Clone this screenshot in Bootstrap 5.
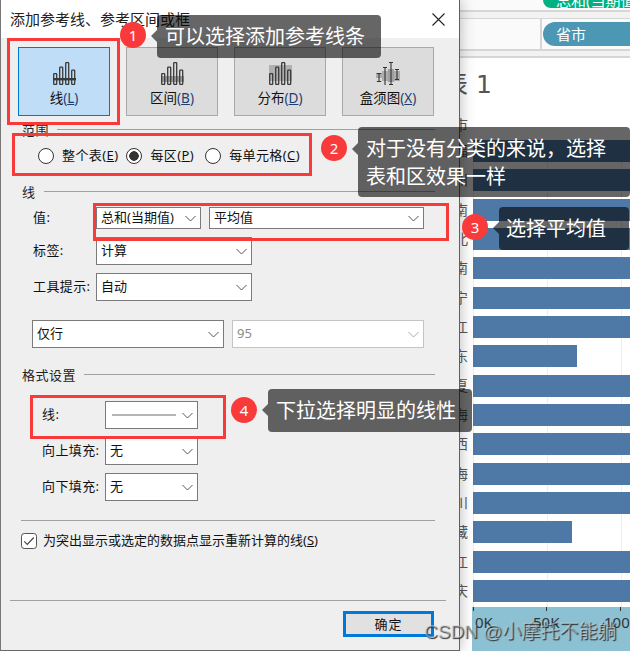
<!DOCTYPE html>
<html lang="zh-CN">
<head>
<meta charset="utf-8">
<title>添加参考线</title>
<link href="https://cdn.jsdelivr.net/npm/bootstrap@5.3.0/dist/css/bootstrap.min.css" rel="stylesheet">
<style>
html,body{height:651px;overflow:hidden}
body{position:relative;width:630px;background:#fff;font-family:"Noto Sans","Noto Sans CJK SC",sans-serif;font-size:13px;line-height:1.2;color:#111}
/* dialog */
.dlg{position:relative;z-index:2;flex:0 0 460px;height:651px;background:#efefef;border-left:1px solid #777;border-right:1px solid #5f5f5f;border-bottom:1px solid #666;box-shadow:0 0 14px rgba(0,0,0,.28)}
.dlg-title{height:38px;background:#fff;padding:0 14px 0 9px;font-size:15px;color:#222}
.tool-row{margin:9px 0 0 17px;gap:16px}
.tool-btn{width:92px;height:69px;border-radius:0;background:#dcdcdc;border:1px solid #a9a9a9;padding:14px 0 8px;font-size:13.5px;color:#111;line-height:1.2}
.tool-btn.on{background:#bfddf6;border-color:#0078d7}
.tool-btn svg{display:block;margin:0 auto 5px}
.mn{color:#1c3f73}
.grp{margin:0 24px 0 21px;height:16px;gap:8px;font-size:13px;letter-spacing:.5px;color:#222}
.grp span{padding-top:4px}
.grp i{flex:1;height:1px;background:#a0a0a0}
.grp.g-range{margin-top:5px}
.radios{margin:9px 0 0 37px;height:20px}
.radios .form-check{margin:0;padding:0;min-height:0;display:flex;align-items:center;gap:8px}
.radios .gp1{margin-right:8px}
.radios .gp2{margin-right:11px}
.radios label{letter-spacing:.4px}
.rad{width:16px!important;height:16px;margin:0!important;float:none!important;border:1px solid #333;background-color:#fff;flex:none}
.rad:checked{background-color:#fff;border-color:#333;background-image:radial-gradient(circle,#333 0 4.5px,transparent 5px)}
.frow{display:flex;align-items:center}
.lbl{width:63px;flex:none;font-size:13px;letter-spacing:.4px;color:#111;white-space:nowrap}
.sel{border-radius:0;border:1px solid #7a7a7a;background-color:#fff;padding:0 20px 0 4px;font-size:13px;line-height:1.2;color:#111;background-image:url("data:image/svg+xml,%3csvg xmlns='http://www.w3.org/2000/svg' viewBox='0 0 11 7'%3e%3cpath fill='none' stroke='%23555' stroke-width='1' d='M.5 1l5 5 5-5'/%3e%3c/svg%3e");background-size:11px 7px;background-position:right 4px center;box-shadow:none}
.sel:disabled{background-color:#fff;border-color:#c4c4c4;color:#8a8a8a;background-image:url("data:image/svg+xml,%3csvg xmlns='http://www.w3.org/2000/svg' viewBox='0 0 11 7'%3e%3cpath fill='none' stroke='%23aaa' stroke-width='1' d='M.5 1l5 5 5-5'/%3e%3c/svg%3e")}
.h21{height:22px}.h28{height:28px}
.w105{width:105px}.w215{width:215px}.w157{width:156px}.w192{width:192px}.w93{width:93px}
.line-sel{display:flex;align-items:center;padding-left:6px}
.line-sel i{display:block;width:64px;height:2px;background:#b5b5b5}
.m-val{margin:8px 0 0 32px}.m-8{margin:8px 0 0 32px}.m-opt{margin:19px 0 0 31px;gap:8px}
.grp.g-line{margin-top:17px}.grp.g-fmt{margin-top:18px}
.m-l1{margin:19px 0 0 41px}.m-l2{margin:8px 0 0 41px}
.rule1{height:1px;background:#a0a0a0;margin:19px 24px 0 20px}
.chk-row{margin:12px 0 0 20px;height:16px;gap:6px;letter-spacing:0}
.chk{width:16px!important;height:16px;margin:0!important;float:none!important;border-radius:0;border:1px solid #555;background-color:#fff;flex:none}
.chk:checked{background-color:#fff;border-color:#555;background-image:url("data:image/svg+xml,%3csvg xmlns='http://www.w3.org/2000/svg' viewBox='0 0 16 16'%3e%3cpath fill='none' stroke='%23444' stroke-width='1.3' d='M2.5 8.5l3.5 3.5 7.5-8'/%3e%3c/svg%3e")}
.rule2{height:1px;background:#a0a0a0;margin:51px 13px 0 9px}
.ok-btn{width:91px;height:26px;margin:10px 25px 0 auto;display:block;padding:0;border-radius:0;background:#e1e1e1;border:3px solid #0078d7;font-size:13px;letter-spacing:1px;color:#111;line-height:1}
/* report behind */
.rpt{flex:1;min-width:0;height:651px;position:relative;overflow:hidden}
.hd1{background:#fafafa;border-bottom:2px solid #d6d6d6;padding-left:83px;box-sizing:content-box;height:10px}
.hd-gap{height:6px;background:#f2f2f2}
.hd2{background:#fafafa;border-top:1px solid #d6d6d6;border-bottom:2px solid #d6d6d6;box-sizing:content-box;height:30px}
.hd2 .cell{margin-left:80px;height:30px;border-left:2px solid #d6d6d6;padding:3px 0 0 1px}
.hd-gap2{background:#f2f2f2;border-bottom:2px solid #d6d6d6;box-sizing:content-box;height:5px}
.pill-g{height:8px;background:#00b181;border-radius:0 0 0 12px;color:#fff;font-size:15px;line-height:0;padding-left:13px;overflow:hidden;white-space:nowrap}
.pill-t{height:24px;background:#4c97b4;border-radius:12px 0 0 12px;color:#fff;font-size:15px;line-height:24px;padding-left:13px;letter-spacing:0}
.rpt-title{margin:10px 0 0 -17px;font-family:"DejaVu Sans","Noto Sans CJK SC",sans-serif;font-size:25px;line-height:34px;color:#555;white-space:nowrap}
.head-cat{height:22px;margin-top:12px;width:13px;overflow:hidden;position:relative;font-size:14px;line-height:22px;color:#5a5a5a}
.head-cat span{position:absolute;right:5px;top:0}
.plot{margin-top:4px;height:467px;background-image:linear-gradient(90deg,#eee 0 1px,transparent 1px);background-size:74px 100%;background-position:87px 0;background-repeat:repeat-x}
.brow{height:22px;margin-bottom:7.33px}
.cat{width:13px;flex:none;overflow:hidden;position:relative;font-size:14px;line-height:22px;color:#5a5a5a}
.cat span{position:absolute;right:5px;top:0}
.bar{height:22px;background:#4e79a7}
.axis{margin-left:12px;height:44px;background:#8cc1d3;position:relative;color:#333;font-size:15px;background-image:linear-gradient(#333 0 4px,transparent 4px),linear-gradient(#333 0 4px,transparent 4px),linear-gradient(#333 0 4px,transparent 4px);background-size:1px 100%;background-repeat:no-repeat;background-position:1px 0,74px 0,148px 0;padding-top:6px;white-space:nowrap}
.axis-in b{font-weight:400;display:block}
.t0{margin-left:3px;width:58px}.t1{width:71px}
/* annotations over the picture */
.frame{position:absolute;z-index:5;border:3px solid #f93a3a}
.dot{position:absolute;z-index:6;width:26px;height:26px;border-radius:50%;background:#f93a3a;color:#fff;font-size:15px;line-height:26px;text-align:center}
.tip{position:absolute;z-index:4;background:rgba(0,0,0,.6);color:#fff;border-radius:4px;font-size:20px;padding:0 0 0 8px;white-space:nowrap;line-height:43px}
.tip::before{content:"";position:absolute;left:-6px;top:15px;border-style:solid;border-width:6px 6px 6px 0;border-color:transparent rgba(0,0,0,.6) transparent transparent}
.tip.two{line-height:28px;padding-top:8px}
.tip.two::before{top:16px}
.f1{left:7px;top:38px;width:113px;height:87px}
.f2{left:12px;top:133px;width:300px;height:43px}
.f3{left:93px;top:203px;width:356px;height:38px}
.f4{left:30px;top:395px;width:196px;height:44px}
.d1{left:120px;top:22px}.d2{left:321px;top:135px}.d3{left:462px;top:214px}.d4{left:231px;top:397px}
.t-1{left:157px;top:15px;width:224px;height:43px}
.t-2{left:358px;top:127px;width:272px;height:70px}
.t-3{left:499px;top:207px;width:130px;height:43px;padding-left:7px}
.t-4{left:268px;top:389px;width:204px;height:43px}
.wm{position:absolute;z-index:7;left:424px;top:619px;font-size:19px;line-height:26px;color:rgba(225,225,225,.5);text-shadow:1px 1px 1px rgba(30,30,30,.9);white-space:nowrap;font-family:"Liberation Sans","Noto Sans CJK SC",sans-serif}
</style>
</head>
<body>
<svg width="0" height="0" class="position-absolute">
  <defs>
    <g id="barsx" fill="none" stroke="#3a3a3a" stroke-width="1.3">
      <rect x=".7" y="11.7" width="3" height="10.6" rx=".6"/>
      <rect x="6.7" y="5.2" width="3" height="17.1" rx=".6"/>
      <rect x="12.7" y=".7" width="3" height="21.6" rx=".6"/>
      <rect x="18.7" y="8.2" width="3" height="14.1" rx=".6"/>
    </g>
  </defs>
</svg>
<div class="d-flex">
  <div class="dlg">
    <div class="dlg-title d-flex align-items-center justify-content-between">
      <span>添加参考线、参考区间或框</span>
      <svg width="13" height="13" viewBox="0 0 13 13"><path d="M.5.5l12 12M12.5.5l-12 12" stroke="#222" stroke-width="1.1" fill="none"/></svg>
    </div>
    <div class="d-flex tool-row">
      <button type="button" class="btn tool-btn on">
        <svg width="23" height="23" viewBox="0 0 23 23"><use href="#barsx"/><rect x="0" y="16" width="23" height="2.4" fill="#3a3a3a"/></svg>
        线<span class="mn">(<u>L</u>)</span>
      </button>
      <button type="button" class="btn tool-btn">
        <svg width="23" height="23" viewBox="0 0 23 23"><rect x="0" y="14" width="23" height="6" fill="#9a9a9a"/><use href="#barsx"/></svg>
        区间<span class="mn">(<u>B</u>)</span>
      </button>
      <button type="button" class="btn tool-btn">
        <svg width="23" height="23" viewBox="0 0 23 23"><rect x="0" y="3" width="23" height="16" fill="#b0b0b0"/><use href="#barsx"/></svg>
        分布<span class="mn">(<u>D</u>)</span>
      </button>
      <button type="button" class="btn tool-btn">
        <svg width="24" height="23" viewBox="0 0 24 23">
          <rect x="0" y="11" width="24" height="5" fill="#adadad"/><rect x="6" y="9" width="18" height="10" fill="#adadad"/><rect x="12" y="7" width="6" height="13" fill="#a0a0a0"/>
          <path d="M3 12v8M.8 12h4.4M.8 20h4.4M9 6v18M7 6h4M7 24h4M15 1v22M13 1h4M13 23h4M21 8v10M19 8h4M19 18h4" stroke="#333" stroke-width="1.1" fill="none" transform="translate(0 -.5)"/>
        </svg>
        盒须图<span class="mn">(<u>X</u>)</span>
      </button>
    </div>
    <div class="grp g-range d-flex align-items-center"><span>范围</span><i></i></div>
    <div class="radios d-flex align-items-center">
      <div class="form-check gp1"><input class="form-check-input rad" type="radio" name="sc" id="r1"><label for="r1">整个表(<u>E</u>)</label></div>
      <div class="form-check gp2"><input class="form-check-input rad" type="radio" name="sc" id="r2" checked><label for="r2">每区(<u>P</u>)</label></div>
      <div class="form-check"><input class="form-check-input rad" type="radio" name="sc" id="r3"><label for="r3">每单元格(<u>C</u>)</label></div>
    </div>
    <div class="grp g-line d-flex align-items-center"><span>线</span><i></i></div>
    <div class="frow m-val">
      <span class="lbl">值:</span>
      <select class="form-select sel h21 w105"><option>总和(当期值)</option></select>
      <select class="form-select sel h21 w215 ms-2"><option>平均值</option></select>
    </div>
    <div class="frow m-8"><span class="lbl">标签:</span><select class="form-select sel h28 w157"><option>计算</option></select></div>
    <div class="frow m-8"><span class="lbl">工具提示:</span><select class="form-select sel h28 w157"><option>自动</option></select></div>
    <div class="frow m-opt">
      <select class="form-select sel h28 w192"><option>仅行</option></select>
      <select class="form-select sel h28 w192" disabled><option>95</option></select>
    </div>
    <div class="grp g-fmt d-flex align-items-center"><span>格式设置</span><i></i></div>
    <div class="frow m-l1"><span class="lbl">线:</span><div class="form-select sel h28 w93 line-sel"><i></i></div></div>
    <div class="frow m-l2"><span class="lbl">向上填充:</span><select class="form-select sel h28 w93"><option>无</option></select></div>
    <div class="frow m-l2"><span class="lbl">向下填充:</span><select class="form-select sel h28 w93"><option>无</option></select></div>
    <div class="rule1"></div>
    <div class="d-flex align-items-center chk-row"><input class="form-check-input chk" type="checkbox" id="c1" checked><label for="c1">为突出显示或选定的数据点显示重新计算的线(<u>S</u>)</label></div>
    <div class="rule2"></div>
    <button type="button" class="btn ok-btn">确定</button>
  </div>

  <div class="rpt">
    <div class="hd1"><div class="pill-g">总和(当期值)</div></div>
    <div class="hd-gap"></div>
    <div class="hd2"><div class="cell"><div class="pill-t">省市</div></div></div>
    <div class="hd-gap2"></div>
    <div class="rpt-title">表 1</div>
    <div class="head-cat"><span>市</span></div>
    <div class="plot">
      <div class="d-flex brow"><div class="cat"><span>福</span></div><div class="bar flex-grow-1"></div></div>
      <div class="d-flex brow"><div class="cat"><span>州</span></div><div class="bar flex-grow-1"></div></div>
      <div class="d-flex brow"><div class="cat"><span>南</span></div><div class="bar flex-grow-1"></div></div>
      <div class="d-flex brow"><div class="cat"><span>北</span></div><div class="bar flex-grow-1"></div></div>
      <div class="d-flex brow"><div class="cat"><span>南</span></div><div class="bar flex-grow-1"></div></div>
      <div class="d-flex brow"><div class="cat"><span>宁</span></div><div class="bar flex-grow-1"></div></div>
      <div class="d-flex brow"><div class="cat"><span>江</span></div><div class="bar flex-grow-1"></div></div>
      <div class="d-flex brow"><div class="cat"><span>东</span></div><div class="bar" style="width:104px"></div></div>
      <div class="d-flex brow"><div class="cat"><span>夏</span></div><div class="bar flex-grow-1"></div></div>
      <div class="d-flex brow"><div class="cat"><span>海</span></div><div class="bar flex-grow-1"></div></div>
      <div class="d-flex brow"><div class="cat"><span>西</span></div><div class="bar flex-grow-1"></div></div>
      <div class="d-flex brow"><div class="cat"><span>海</span></div><div class="bar flex-grow-1"></div></div>
      <div class="d-flex brow"><div class="cat"><span>川</span></div><div class="bar flex-grow-1"></div></div>
      <div class="d-flex brow"><div class="cat"><span>藏</span></div><div class="bar" style="width:99px"></div></div>
      <div class="d-flex brow"><div class="cat"><span>江</span></div><div class="bar flex-grow-1"></div></div>
      <div class="d-flex brow"><div class="cat"><span>庆</span></div><div class="bar flex-grow-1"></div></div>
    </div>
    <div class="axis"><div class="d-flex axis-in"><b class="t0">0K</b><b class="t1">50K</b><b>100</b></div></div>
  </div>
</div>

<div class="frame f1"></div>
<div class="frame f2"></div>
<div class="frame f3"></div>
<div class="frame f4"></div>
<div class="dot d1">1</div>
<div class="dot d2">2</div>
<div class="dot d3">3</div>
<div class="dot d4">4</div>
<div class="tip t-1">可以选择添加参考线条</div>
<div class="tip two t-2">对于没有分类的来说，选择<br>表和区效果一样</div>
<div class="tip t-3">选择平均值</div>
<div class="tip t-4">下拉选择明显的线性</div>
<div class="wm">CSDN @小摩托不能躺</div>
</body>
</html>
